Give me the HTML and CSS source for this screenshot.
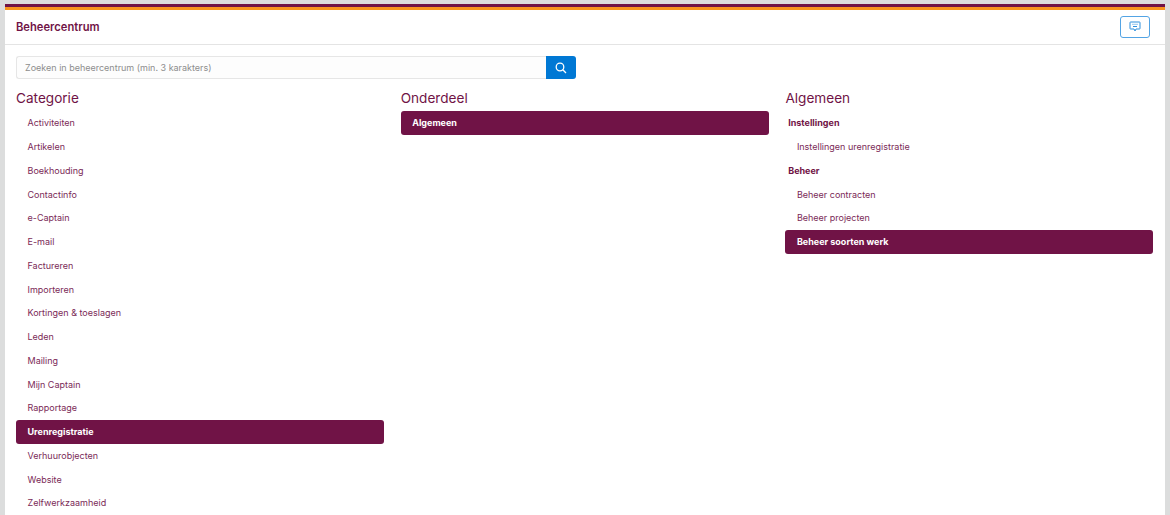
FILE: index.html
```html
<!DOCTYPE html>
<html lang="nl">
<head>
<meta charset="utf-8">
<title>Beheercentrum</title>
<link rel="stylesheet" href="styles.css">
</head>
<body>
<div class="panel">
  <header class="topbar">
    <h1 class="title">Beheercentrum</h1>
    <button class="feedback" type="button" aria-label="Feedback">
      <svg width="12" height="12" viewBox="0 0 12 12" fill="none" stroke="#2f8fdc" stroke-width="1"><path d="M1.500 1h9a.5.5 0 0 1 .5.5v6a.5.5 0 0 1-.5.5H7L6 10 5 8H1.500a.5.5 0 0 1-.5-.5v-6a.5.5 0 0 1 .5-.5z"/><path d="M3.500 3.300h1M5.500 3.300h1M7.500 3.300h1M4 5.500h4"/></svg>
    </button>
  </header>
  <div class="content">
    <div class="search">
      <input class="search-input" type="text" placeholder="Zoeken in beheercentrum (min. 3 karakters)">
      <button class="search-btn" type="button" aria-label="Zoeken">
        <svg width="12" height="12" viewBox="0 0 12 12" fill="none" stroke="#fff" stroke-width="1.300"><circle cx="5" cy="5" r="3.800"/><path d="M7.800 7.800 11 11"/></svg>
      </button>
    </div>
    <div class="columns">
      <section class="column">
        <h2 class="heading">Categorie</h2>
        <ul class="list">
          <li class="item">Activiteiten</li>
          <li class="item">Artikelen</li>
          <li class="item">Boekhouding</li>
          <li class="item">Contactinfo</li>
          <li class="item">e-Captain</li>
          <li class="item">E-mail</li>
          <li class="item">Factureren</li>
          <li class="item">Importeren</li>
          <li class="item">Kortingen &amp; toeslagen</li>
          <li class="item">Leden</li>
          <li class="item">Mailing</li>
          <li class="item">Mijn Captain</li>
          <li class="item">Rapportage</li>
          <li class="item active">Urenregistratie</li>
          <li class="item">Verhuurobjecten</li>
          <li class="item">Website</li>
          <li class="item">Zelfwerkzaamheid</li>
        </ul>
      </section>
      <section class="column">
        <h2 class="heading">Onderdeel</h2>
        <ul class="list">
          <li class="item active">Algemeen</li>
        </ul>
      </section>
      <section class="column">
        <h2 class="heading">Algemeen</h2>
        <ul class="list">
          <li class="item group">Instellingen</li>
          <li class="item sub">Instellingen urenregistratie</li>
          <li class="item group">Beheer</li>
          <li class="item sub">Beheer contracten</li>
          <li class="item sub">Beheer projecten</li>
          <li class="item sub active">Beheer soorten werk</li>
        </ul>
      </section>
    </div>
  </div>
</div>
</body>
</html>
```
FILE: styles.css
```css
* { box-sizing: border-box; }
html, body { height: 100%; }
body {
  margin: 0;
  padding: 4px 5px 0;
  background: #dcdddd;
  overflow: hidden;
  font-family: Inter, "Liberation Sans", sans-serif;
  color: #701346;
}
.panel {
  height: 511px;
  background: #fff;
  border-top: 3px solid #701346;
  overflow: hidden;
}
.panel::before {
  content: "";
  display: block;
  height: 3px;
  background: #f7941d;
}
.topbar {
  height: 35px;
  display: flex;
  align-items: center;
  justify-content: space-between;
  padding: 0 15px 0 11px;
  border-bottom: 1px solid #e4e4e4;
}
.title {
  margin: 0;
  font-size: 11.200px;
  font-weight: 600;
}
.feedback {
  width: 30px;
  height: 22px;
  padding: 0;
  display: flex;
  align-items: center;
  justify-content: center;
  background: #fff;
  border: 1px solid #53a4e4;
  border-radius: 3px;
}
.content { padding: 11px 0 0 11px; }
.search { display: flex; width: 560px; height: 23px; }
.search-input {
  width: 530px;
  height: 100%;
  padding: 0 8px;
  background: #fdfdfd;
  border: 1px solid #e6e6e6;
  border-right: 0;
  border-radius: 3px 0 0 3px;
  font: 9px Inter, "Liberation Sans", sans-serif;
  outline: none;
}
.search-input::placeholder { color: #8d8d8d; opacity: 1; }
.search-btn {
  width: 30px;
  height: 100%;
  padding: 0;
  display: flex;
  align-items: center;
  justify-content: center;
  background: #0078d4;
  border: 0;
  border-radius: 0 3px 3px 0;
}
.columns {
  display: grid;
  grid-template-columns: repeat(3, 368px);
  column-gap: 16.700px;
  margin-top: 8.500px;
}
.heading {
  margin: 0 0 3.900px;
  font-size: 13.600px;
  line-height: 20px;
  font-weight: 400;
}
.list { margin: 0; padding: 0; list-style: none; }
.item {
  height: 23.760px;
  line-height: 23.760px;
  padding-left: 11.500px;
  font-size: 9px;
  color: #7b2a57;
}
.group { padding-left: 2.800px; font-weight: 700; color: #701346; }
.sub { padding-left: 11.500px; }
.active {
  background: #701346;
  color: #fff;
  font-weight: 700;
  border-radius: 3px;
}
```
